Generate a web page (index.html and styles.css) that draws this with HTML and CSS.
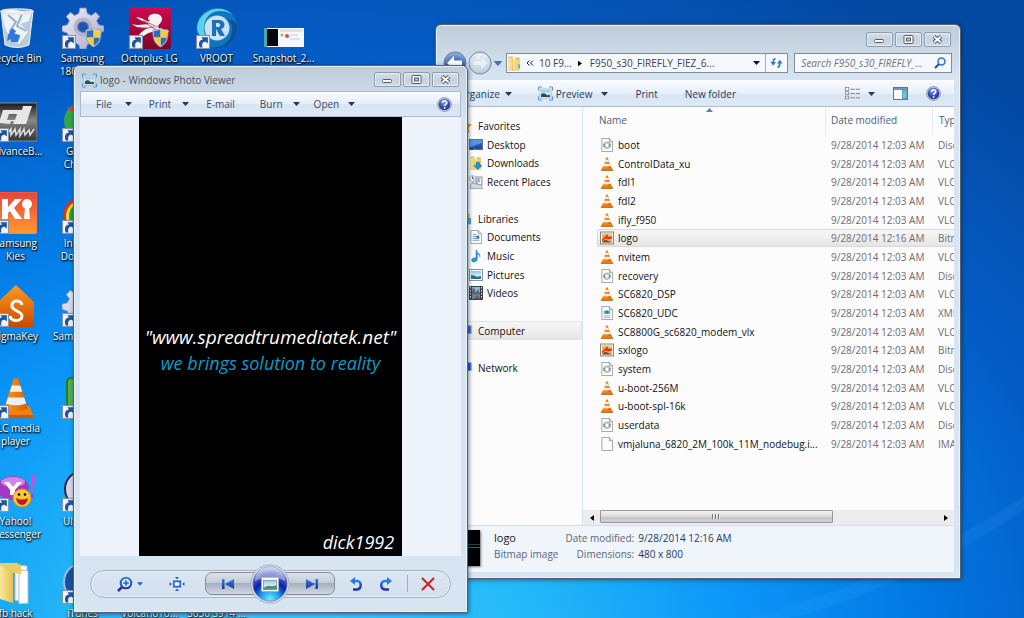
FILE: index.html
```html
<!DOCTYPE html>
<html lang="en">
<head>
<meta charset="utf-8">
<title>Desktop</title>
<link rel="stylesheet" href="styles.css">
</head>
<body>
<svg class="defs" aria-hidden="true">
  <defs>
    <linearGradient id="g-orange" x1="0" y1="0" x2="0" y2="1"><stop offset="0" stop-color="#ff9a1f"/><stop offset="1" stop-color="#c84a00"/></linearGradient>
    <linearGradient id="g-cone" x1="0" y1="0" x2="1" y2="0"><stop offset="0" stop-color="#ff9a20"/><stop offset=".5" stop-color="#f47a08"/><stop offset="1" stop-color="#d25c00"/></linearGradient>
    <linearGradient id="g-kies" x1="0" y1="0" x2="0" y2="1"><stop offset="0" stop-color="#e5443a"/><stop offset="1" stop-color="#ff9c2c"/></linearGradient>
    <linearGradient id="g-oct" x1="0" y1="0" x2="0" y2="1"><stop offset="0" stop-color="#d10a50"/><stop offset="1" stop-color="#7c0728"/></linearGradient>
    <linearGradient id="g-gear" x1="0" y1="0" x2="1" y2="1"><stop offset="0" stop-color="#f1f1fb"/><stop offset="1" stop-color="#a7a7cb"/></linearGradient>
    <linearGradient id="g-folder" x1="0" y1="0" x2="1" y2="0"><stop offset="0" stop-color="#fff0a8"/><stop offset="1" stop-color="#e3c155"/></linearGradient>
    <linearGradient id="g-blue" x1="0" y1="0" x2="0" y2="1"><stop offset="0" stop-color="#2a80e8"/><stop offset="1" stop-color="#23329c"/></linearGradient>
    <linearGradient id="g-sky" x1="0" y1="0" x2="0" y2="1"><stop offset="0" stop-color="#8bc4ec"/><stop offset=".55" stop-color="#d7ecf3"/><stop offset="1" stop-color="#3c9a74"/></linearGradient>
    <linearGradient id="g-adv" x1="0" y1="0" x2="0" y2="1"><stop offset="0" stop-color="#181818"/><stop offset=".45" stop-color="#888"/><stop offset="1" stop-color="#333"/></linearGradient>
    <radialGradient id="g-orb" cx=".5" cy=".95" r=".95"><stop offset="0" stop-color="#6ff0ff"/><stop offset=".3" stop-color="#1a9aee"/><stop offset=".55" stop-color="#0a20a8"/><stop offset=".8" stop-color="#5560c8"/><stop offset="1" stop-color="#c8cdf0"/></radialGradient>
    <radialGradient id="g-back" cx=".5" cy=".9" r=".9"><stop offset="0" stop-color="#4aa4ec"/><stop offset=".5" stop-color="#2758ac"/><stop offset="1" stop-color="#9dbce4"/></radialGradient>
    <radialGradient id="g-fwd" cx=".5" cy=".2" r=".9"><stop offset="0" stop-color="#eef4fa"/><stop offset="1" stop-color="#b5c6d8"/></radialGradient>
    <radialGradient id="g-help" cx=".45" cy=".3" r=".8"><stop offset="0" stop-color="#7a97ec"/><stop offset=".6" stop-color="#2d49b8"/><stop offset="1" stop-color="#16267c"/></radialGradient>

    <symbol id="cut" viewBox="0 0 13 13"><rect x=".5" y=".5" width="12" height="12" fill="#f2f4f8" stroke="#8a94a2"/><path d="M3.500 11.500C1.500 7 4 4.200 6.500 4.200L5 2h6v6L9 6.300C6.500 6.300 5 8 6 11.500z" fill="#1f559f"/></symbol>
    <symbol id="shield" viewBox="0 0 18 22"><path d="M9 1c3 2 5 2 8 2 0 9-1 14-8 18C2 17 1 12 1 3c3 0 5 0 8-2z" fill="#e6e9ee" stroke="#8d96a4"/><path d="M9 2.500V11H2.300C2 9 2 7 2 4c3 0 5-.5 7-1.500zM9 11h6.700c-.6 4-2.500 6.500-6.700 9z" fill="#2c6cc4"/><path d="M9 2.500C11 3.500 13 4 16 4c0 3 0 5-.3 7H9zM9 11v9c-4.200-2.500-6.100-5-6.700-9z" fill="#f6ca3a"/></symbol>
    <symbol id="gear" viewBox="0 0 40 40"><path d="M17 1h6l1 5 4 2 4-3 4 4-3 4 2 4 5 1v5l-5 2-2 4 3 4-4 4-4-3-4 2-1 4h-6l-1-4-4-2-4 3-4-4 3-4-2-4-5-2v-5l5-1 2-4-3-4 4-4 4 3 4-2z" fill="url(#g-gear)" stroke="#8585b4" stroke-width=".8"/><circle cx="20" cy="19" r="9" fill="#b3b3d2"/><circle cx="20" cy="19" r="5" fill="#1558b8" stroke="#707098"/></symbol>
    <symbol id="cone" viewBox="0 0 14 16"><path d="M2 11h10l2 4.500H0z" fill="#f08010"/><path d="M0 14.500h14v1.200H0z" fill="#c85c00"/><path d="M6.200.5h1.600L11.500 12c-1.500 1.300-7.500 1.300-9 0z" fill="url(#g-cone)"/><path d="M5.400 3.200h3.200l.8 2.400H4.600zM3.900 7.800h6.200l.8 2.300c-2 .9-5.800.9-7.700 0z" fill="#eceef0"/></symbol>
    <symbol id="doc" viewBox="0 0 13 15"><path d="M1 .5h8l3.500 3.500v10.500H1z" fill="#fbfcfc" stroke="#9aa0a6"/><path d="M9 .5V4h3.500" fill="#dfe4e8" stroke="#9aa0a6"/></symbol>
    <symbol id="disc" viewBox="0 0 13 15"><use href="#doc"/><circle cx="6.500" cy="7.700" r="3.500" fill="#cdd2cf" stroke="#989ea2" stroke-width=".8"/><circle cx="6.500" cy="7.700" r="1.300" fill="#fff"/><path d="M3.500 6v3.500M9.500 6v3.500" stroke="#5c7c68"/></symbol>
    <symbol id="xml" viewBox="0 0 13 15"><use href="#doc"/><rect x="3" y="5" width="7" height="3.500" fill="#5ab8c8"/><rect x="5" y="5" width="3" height="3" fill="#288c74"/><path d="M3 10.500h7M3 12.300h7" stroke="#9bb0cc"/></symbol>
    <symbol id="bmp" viewBox="0 0 14 13"><rect x=".5" y=".5" width="13" height="12" fill="#f1f1ee" stroke="#858585"/><rect x="2" y="2" width="10" height="9" fill="#f4b568"/><path d="M2 8l5-5 5 2v2l-4 1-3-1-3 3z" fill="#d8351c"/><path d="M7 5l3-3 2 3z" fill="#f6d850"/><path d="M2 11l3-3 7 3z" fill="#7c4c20"/><path d="M8 9l4-2v3z" fill="#c8b088"/></symbol>
    <symbol id="photo" viewBox="0 0 15 14"><path d="M.5 4V.5H4M11 .5h3.500V4M14.500 10v3.500H11M4 13.500H.5V10" fill="none" stroke="#4b9bdc"/><rect x="2" y="2.500" width="11" height="9" fill="#fff" stroke="#90a4b8" stroke-width=".7"/><rect x="3" y="3.500" width="9" height="7" fill="url(#g-sky)"/><path d="M3 10.500V8c2-2 4-1 5 0s2 1 4 .5v2z" fill="#1b5265"/></symbol>
    <symbol id="help" viewBox="0 0 15 15"><circle cx="7.500" cy="7.500" r="7" fill="#c3c9d4" stroke="#858c98" stroke-width=".7"/><circle cx="7.500" cy="7.500" r="5.800" fill="url(#g-help)"/><path d="M5.300 6c0-3 4.700-2.800 4.500-.1-.1 1.500-2.200 1.500-2.200 3" fill="none" stroke="#fff" stroke-width="1.500"/><circle cx="7.600" cy="11" r=".9" fill="#fff"/></symbol>
    <symbol id="down" viewBox="0 0 7 4"><path d="M0 0h7L3.500 4z" fill="currentColor"/></symbol>
    <symbol id="w-min" viewBox="0 0 11 9"><rect x=".5" y="4.500" width="9" height="3" rx="1" fill="#fff" stroke="#535a68"/></symbol>
    <symbol id="w-max" viewBox="0 0 11 9"><rect x="1" y=".5" width="9" height="8" rx="1" fill="#fff" stroke="#535a68"/><rect x="3.500" y="3" width="4" height="3" fill="#b7c4d5" stroke="#535a68"/></symbol>
    <symbol id="w-close" viewBox="0 0 11 9"><path d="M2 1.500l7 6M9 1.500l-7 6" stroke="#535a68" stroke-width="3.800"/><path d="M2.300 1.800l6.400 5.400M8.700 1.800L2.300 7.200" stroke="#fff" stroke-width="1.800"/></symbol>
    <symbol id="folder" viewBox="0 0 14 16"><path d="M1 1h5l1 1h5v13H1z" fill="#e2bc56" stroke="#c09a3a" stroke-width=".5"/><path d="M4 1.500h4v13H4z" fill="#fffbe4"/><path d="M1 1.500l5 1.500v13l-5-1.500z" fill="url(#g-folder)"/><path d="M7 3h5v12H7z" fill="#efd374"/><path d="M11 9h2v4h-2z" fill="#67a6c4"/></symbol>
  </defs>
</svg>
<main class="desktop">
  <svg class="streak" viewBox="0 0 300 140" preserveAspectRatio="none" aria-hidden="true"><path d="M30 140C120 115 220 70 300 15v14C220 84 130 126 70 140z" fill="#38aaff" opacity=".14"/></svg>

  <ul class="icons">
    <li class="shortcut"><span class="art"><svg viewBox="0 0 42 42"><path d="M6 4h32l-4 34q-12 5-24 0z" fill="#bccbdc" stroke="#edf4fa"/><path d="M7 5q8-5 15-2t15 1l-3 10-9 3 8 8-9 12-8-5-5-9-3-10z" fill="#eef3f8"/><path d="M13 8l8 7-6 9 10 6M27 7l-5 12 9 5" fill="none" stroke="#9bb0c6" stroke-width="2"/><path d="M13 28l4-7 4 3-2 3 6 1-2 7h-7v-3l-4 2z" fill="#2c78dc"/><ellipse cx="22" cy="4.500" rx="16" ry="2.500" fill="none" stroke="#dbe4ec" stroke-width="1.500"/></svg></span><span class="label">Recycle Bin</span></li>
    <li class="shortcut"><span class="art"><svg viewBox="0 0 42 42"><rect x="0" y="3" width="42" height="38" fill="url(#g-adv)" stroke="#8c8c8c"/><path d="M4 23l4-13h19l1-4h9l-6 18H18l1-3h-3l-1 3zM14 14l-2 6h8l2-6z" fill="#e7e7e7" fill-rule="evenodd"/><path d="M12 34l4-5v6l4-6 1 6 4-6v7l4-7 1 6 4-5 1 5 4-6" fill="none" stroke="#ddd" stroke-width="1.500"/></svg><svg class="cut"><use href="#cut"/></svg></span><span class="label">AdvanceB...</span></li>
    <li class="shortcut"><span class="art"><svg viewBox="0 0 42 42"><rect x="0" y="0" width="42" height="42" rx="2" fill="url(#g-kies)" stroke="#ff6a50"/><path d="M7 7h6v8l7-8h7l-8 9 8 11h-7l-5-8-2 2v6H7z" fill="#fff"/><circle cx="32" cy="12" r="5" fill="#fff"/><path d="M30 15h4l1 12h-6z" fill="#fff"/></svg><svg class="cut"><use href="#cut"/></svg></span><span class="label">Samsung<br>Kies</span></li>
    <li class="shortcut"><span class="art"><svg viewBox="0 0 42 42"><path d="M21 0l18 17v25H3V17z" fill="url(#g-orange)"/><path d="M27 20c-1-6-11-5-10 1 0 5 10 5 10 10 0 6-11 6-12 0" fill="none" stroke="#fff" stroke-width="3"/></svg><svg class="cut"><use href="#cut"/></svg></span><span class="label">SigmaKey</span></li>
    <li class="shortcut"><span class="art"><svg viewBox="0 0 14 16"><use href="#cone"/></svg><svg class="cut"><use href="#cut"/></svg></span><span class="label">VLC media<br>player</span></li>
    <li class="shortcut"><span class="art"><svg viewBox="0 0 42 42"><ellipse cx="18" cy="18" rx="16" ry="12" fill="#a536c4"/><ellipse cx="18" cy="12" rx="12" ry="5" fill="#d99bec" opacity=".8"/><path d="M9 12h5l4 5 4-5h5l-7 8v5h-5v-5z" fill="#fff"/><path d="M36 6l5-1-3 17h-2z" fill="#c650d8"/><circle cx="37" cy="26" r="1.800" fill="#9c38b8"/><circle cx="27" cy="28" r="9" fill="#ffc832" stroke="#e08c10"/><path d="M21 28q6 3 12 0-1 7-6 7t-6-7z" fill="#b82020"/><circle cx="24" cy="24.500" r="1.300"/><circle cx="30" cy="24.500" r="1.300"/></svg><svg class="cut"><use href="#cut"/></svg></span><span class="label">Yahoo!<br>Messenger</span></li>
    <li class="shortcut"><span class="art"><svg viewBox="0 0 42 42"><path d="M20 3l12 1v38l-12-4z" fill="#f4f6f8" stroke="#b8bcc4"/><path d="M24 8l9 1v32l-9 1z" fill="#fff" stroke="#b8bcc4"/><path d="M0 1h22l4 2v9L0 8z" fill="#e9cc68"/><path d="M2 2l16 8v31L2 36z" fill="url(#g-folder)"/></svg></span><span class="label">fb hack</span></li>

    <li class="shortcut"><span class="art"><svg viewBox="0 0 40 40"><use href="#gear"/></svg><svg class="shield"><use href="#shield"/></svg><svg class="cut"><use href="#cut"/></svg></span><span class="label">Samsung<br>1800 Tool</span></li>
    <li class="shortcut"><span class="art"><svg viewBox="0 0 42 42"><circle cx="21" cy="21" r="19" fill="#34a64a"/><path d="M6 10Q18-4 33 7l5 7H21z" fill="#e33b2e"/><circle cx="21" cy="21" r="9" fill="#3d7be8" stroke="#fff" stroke-width="2"/></svg><svg class="cut"><use href="#cut"/></svg></span><span class="label">Google<br>Chrome</span></li>
    <li class="shortcut"><span class="art"><svg viewBox="0 0 42 42"><circle cx="20" cy="24" r="15" fill="none" stroke="#db3320" stroke-width="8"/><circle cx="20" cy="24" r="14" fill="none" stroke="#f1dc26" stroke-width="4"/><circle cx="20" cy="24" r="11" fill="none" stroke="#2a9a3a" stroke-width="4"/></svg><svg class="cut"><use href="#cut"/></svg></span><span class="label">Internet<br>Downlo...</span></li>
    <li class="shortcut"><span class="art"><svg viewBox="0 0 40 40"><use href="#gear"/></svg><svg class="cut"><use href="#cut"/></svg></span><span class="label">Samsung 2...</span></li>
    <li class="shortcut"><span class="art"><svg viewBox="0 0 42 42"><rect x="5" y="1" width="32" height="38" rx="4" fill="#55ad4c" stroke="#217c2c" stroke-width="2"/></svg><svg class="cut"><use href="#cut"/></svg></span><span class="label">Go</span></li>
    <li class="shortcut"><span class="art"><svg viewBox="0 0 42 42"><circle cx="21" cy="19" r="18" fill="#d7d5ee" stroke="#282838" stroke-width="2"/><circle cx="21" cy="19" r="10" fill="#a2784c"/></svg><svg class="cut"><use href="#cut"/></svg></span><span class="label">UltraISO</span></li>
    <li class="shortcut"><span class="art"><svg viewBox="0 0 42 42"><circle cx="21" cy="20" r="19" fill="#1c4f9c" stroke="#9dbbe0" stroke-width="2"/></svg><svg class="cut"><use href="#cut"/></svg></span><span class="label">iTunes</span></li>

    <li class="shortcut at-3"><span class="art"><svg viewBox="0 0 42 42"><rect width="42" height="42" rx="3" fill="url(#g-oct)"/><path d="M19 12c0-7 14-7 14 0 0 4-4 5-4 8 3 3 7 5 12 4-4 3-9 2-13-1 1 6 4 10 5 15-4-4-7-8-9-13-6 0-11 6-21 11 5-6 9-12 16-15-5-1-11 1-16-4 6 2 11 0 17 0-4-3-9-3-13-7 6 0 10 5 14 4 0-1-2-1-2-2z" fill="#f7f1f3"/><path d="M14 13l14 7M16 16l12 7M12 22l13-2" stroke="#a73958" stroke-width=".8"/></svg><svg class="shield"><use href="#shield"/></svg><svg class="cut"><use href="#cut"/></svg></span><span class="label">Octoplus LG</span></li>
    <li class="shortcut at-4"><span class="art"><svg viewBox="0 0 42 42"><circle cx="21" cy="21" r="20.500" fill="#0d76bc"/><path d="M1 20C3 4 24-5 37 8 25 0 9 4 8 20c-1 6 2 9 4 12C4 30 1 26 1 20z" fill="#5ed0ec"/><path d="M41 18c2 17-14 28-29 21 12 4 23-3 24-15 1-6-2-9-4-12 5 1 8 3 9 6z" fill="#0f4f98"/><circle cx="21" cy="21" r="12.500" fill="#c8e1f6"/><path d="M16 13h7c7 0 7 8 2 9l4 7h-5l-4-7v7h-4zm4 3v4h2c3 0 3-4 0-4z" fill="#1f6fb8"/></svg><svg class="cut"><use href="#cut"/></svg></span><span class="label">VROOT</span></li>
    <li class="shortcut at-5"><span class="art"><svg viewBox="0 0 42 42"><rect x="1" y="21" width="40" height="19" fill="#f5f7f8"/><rect x="4" y="22" width="11" height="17" fill="#080808"/><path d="M1 21h3v19H1z" fill="#4aa8ac"/><path d="M17 22h23v3H17z" fill="#dde4ec"/><circle cx="19" cy="28" r="1.500" fill="#8cc444"/><circle cx="24" cy="29" r="2" fill="#e04860"/><path d="M27 28h8M27 32h10" stroke="#ccc"/></svg></span><span class="label">Snapshot_2...</span></li>
    <li class="shortcut bottom at-3"><span class="art"></span><span class="label">VolcanoTo...</span></li>
    <li class="shortcut bottom at-4"><span class="art"></span><span class="label">S650 S914 ...</span></li>
  </ul>

  <section class="window explorer" aria-label="Windows Explorer">
    <header class="caption">
      <div class="controls">
        <button aria-label="Minimize"><svg><use href="#w-min"/></svg></button>
        <button aria-label="Maximize"><svg><use href="#w-max"/></svg></button>
        <button aria-label="Close"><svg><use href="#w-close"/></svg></button>
      </div>
    </header>
    <div class="nav-row">
      <button class="round" aria-label="Back"><svg viewBox="0 0 24 24"><circle cx="12" cy="12" r="11" fill="url(#g-back)" stroke="#67788e"/><path d="M11 5l-7 7 7 7v-4.500h8v-5h-8z" fill="#fff"/></svg></button>
      <button class="round" aria-label="Forward"><svg viewBox="0 0 24 24"><circle cx="12" cy="12" r="11" fill="url(#g-fwd)" stroke="#77879a"/><path d="M13 5l7 7-7 7v-4.500H5v-5h8z" fill="#e9f0f6" stroke="#d0dae4"/></svg></button>
      <button class="recent" aria-label="Recent pages"><svg viewBox="0 0 8 5"><path d="M.5.500h7L4 4.500z" fill="#3c78b4" stroke="#26486c" stroke-width=".6"/></svg></button>
      <div class="address">
        <svg class="i16"><use href="#folder"/></svg>
        <button class="crumb chevrons" aria-label="More locations"><svg viewBox="0 0 8 6"><path d="M3.500.5L1 3l2.500 2.500M7 .5L4.500 3 7 5.500" fill="none" stroke="#222"/></svg></button>
        <button class="crumb">10 F9...</button>
        <svg class="sep" viewBox="0 0 5 7"><path d="M0 0v7l5-3.500z"/></svg>
        <button class="crumb grow">F950_s30_FIREFLY_FIEZ_6...</button>
        <button class="drop" aria-label="Address history"><svg class="down"><use href="#down"/></svg></button>
        <button class="refresh" aria-label="Refresh"><svg viewBox="0 0 14 12"><path d="M6 1.500C3.500 1.500 3.500 3 3.500 6M8 10.500c2.500 0 2.500-2 2.500-5" fill="none" stroke="#2a7cc8" stroke-width="1.800"/><path d="M.5 5h6l-3 4zM7.500 6.500h6l-3-4z" fill="#2a7cc8"/></svg></button>
      </div>
      <label class="search"><input type="text" aria-label="Search" placeholder="Search F950_s30_FIREFLY_..."><svg viewBox="0 0 12 12"><circle cx="7.500" cy="4.500" r="3.500" fill="#eaf5fd" stroke="#2d75be" stroke-width="1.500"/><path d="M5 7l-4 4" stroke="#24509a" stroke-width="2"/></svg></label>
    </div>
    <div class="client">
      <div class="toolbar">
        <button class="organize">Organize<svg class="down"><use href="#down"/></svg></button>
        <button class="preview"><svg class="i16"><use href="#photo"/></svg>Preview<svg class="down"><use href="#down"/></svg></button>
        <button>Print</button>
        <button>New folder</button>
        <div class="tools">
          <button aria-label="Change view"><svg class="i16" viewBox="0 0 14 12"><g fill="#fff" stroke="#8a7070" stroke-width=".7"><rect x=".5" y=".5" width="3" height="2.500"/><rect x=".5" y="4.500" width="3" height="2.500"/><rect x=".5" y="8.500" width="3" height="2.500"/></g><path d="M5 2h4M10 2h4M5 6h4M10 6h4M5 10h4M10 10h4" stroke="#647890" stroke-width=".8"/></svg><svg class="down"><use href="#down"/></svg></button>
          <button aria-label="Show the preview pane"><svg class="i16" viewBox="0 0 15 13"><rect x=".5" y=".5" width="14" height="12" fill="#fff" stroke="#5b7895"/><path d="M1 2h13" stroke="#7497b5" stroke-width="2"/><rect x="9.500" y="3" width="4.500" height="9" fill="#6ec0d8" stroke="#4a8aa8" stroke-width=".7"/></svg></button>
          <button aria-label="Help"><svg class="i16"><use href="#help"/></svg></button>
        </div>
      </div>
      <div class="panes">
        <nav class="tree">
          <ul>
            <li><a href="#"><svg viewBox="0 0 16 16"><path d="M8 0l2.500 5.500L16 6l-4 4 1 6-5-3-5 3 1-6-4-4 5.500-.5z" fill="#f08a24"/></svg>Favorites</a></li>
            <li class="sub"><a href="#"><svg viewBox="0 0 14 14"><rect x=".5" y="1.500" width="13" height="10" fill="#2456b8" stroke="#627084"/><path d="M1 2h12v3L1 9z" fill="#5793e4"/><path d="M1 10h3v1.500H1zM6 9h6v1H6z" fill="#173b7c"/></svg>Desktop</a></li>
            <li class="sub"><a href="#"><svg viewBox="0 0 14 16"><use href="#folder"/><path d="M7 7h4v4h2.500L9 15.500 4.500 11H7z" fill="#2290e0" stroke="#156cb0" stroke-width=".6"/></svg>Downloads</a></li>
            <li class="sub"><a href="#"><svg viewBox="0 0 14 14"><rect x="4" y="2" width="9" height="8" fill="#e6edf2" stroke="#8694a4"/><path d="M6 4h5M6 6h5M6 8h3" stroke="#5f83a4"/><circle cx="3.500" cy="3.500" r="3" fill="#f3f5f7" stroke="#98a2ac" stroke-width=".7"/><path d="M3.500 1.500v2H5" fill="none" stroke="#556"/><path d="M2 8l10 2 1.500 3.500H1z" fill="#d5dade" stroke="#8a929a" stroke-width=".7"/></svg>Recent Places</a></li>
            <li class="start"><a href="#"><svg viewBox="0 0 14 16"><path d="M1 2h12v12H1z" fill="#ecc862"/><path d="M7 7h7v7H7z" fill="#4fa8d8"/></svg>Libraries</a></li>
            <li class="sub"><a href="#"><svg viewBox="0 0 13 15"><use href="#doc"/><path d="M3 5h4M3 7h4M3 9h7M3 11h7" stroke="#6d97c4"/><path d="M7 6h3v3H7z" fill="#2e72b8"/></svg>Documents</a></li>
            <li class="sub"><a href="#"><svg viewBox="0 0 14 16"><path d="M7.500 1c0 4 5 3.500 4 8-.5-3-3-3-3-3v6c0 3-6 4-6.500 1 0-2.500 3-3.500 5-2.500V1z" fill="#2c98dc" stroke="#176ca8" stroke-width=".5"/></svg>Music</a></li>
            <li class="sub"><a href="#"><svg viewBox="0 0 14 12"><rect x=".5" y=".5" width="13" height="11" fill="#fff" stroke="#8394a4"/><rect x="2" y="2" width="10" height="8" fill="url(#g-sky)"/><path d="M2 10V6q4 0 6 2l4-1v3z" fill="#29748c"/></svg>Pictures</a></li>
            <li class="sub"><a href="#"><svg viewBox="0 0 14 14"><rect width="14" height="14" rx="1" fill="#383c44"/><rect x="3" y="1" width="8" height="5.500" fill="#6cc4ee"/><rect x="3" y="7.500" width="8" height="5.500" fill="#4a8ebc"/><path d="M4 1l3 5 3-3v3.500H3M5 13l3-4 3 4" fill="#a24438"/><path d="M1.500 1v12M12.500 1v12" stroke="#dfe2e5" stroke-dasharray="1.500 1.500"/></svg>Videos</a></li>
            <li class="start current"><a href="#"><svg viewBox="0 0 16 16"><rect x="1" y="2" width="14" height="9" fill="#405ed0" stroke="#98a2b4"/><path d="M6 12h4v2H5z" fill="#8b95a8"/></svg>Computer</a></li>
            <li class="start"><a href="#"><svg viewBox="0 0 16 16"><rect x="3" y="2" width="12" height="9" fill="#2550dc" stroke="#8aa0c4"/><path d="M7 12h4v2H6z" fill="#71809c"/></svg>Network</a></li>
          </ul>
        </nav>
        <div class="files">
          <div class="scroller">
          <table>
            <colgroup><col><col class="c-date"><col class="c-type"></colgroup>
            <thead><tr><th>Name<svg class="sort" viewBox="0 0 7 4"><path d="M3.500 0L7 4H0z" fill="#4a88aa"/></svg></th><th>Date modified</th><th>Type</th></tr></thead>
            <tbody>
              <tr><td><svg><use href="#disc"/></svg>boot</td><td>9/28/2014 12:03 AM</td><td>Disc Image File</td></tr>
              <tr><td><svg><use href="#cone"/></svg>ControlData_xu</td><td>9/28/2014 12:03 AM</td><td>VLC media file</td></tr>
              <tr><td><svg><use href="#cone"/></svg>fdl1</td><td>9/28/2014 12:03 AM</td><td>VLC media file</td></tr>
              <tr><td><svg><use href="#cone"/></svg>fdl2</td><td>9/28/2014 12:03 AM</td><td>VLC media file</td></tr>
              <tr><td><svg><use href="#cone"/></svg>ifly_f950</td><td>9/28/2014 12:03 AM</td><td>VLC media file</td></tr>
              <tr class="selected"><td><svg><use href="#bmp"/></svg>logo</td><td>9/28/2014 12:16 AM</td><td>Bitmap image</td></tr>
              <tr><td><svg><use href="#cone"/></svg>nvitem</td><td>9/28/2014 12:03 AM</td><td>VLC media file</td></tr>
              <tr><td><svg><use href="#disc"/></svg>recovery</td><td>9/28/2014 12:03 AM</td><td>Disc Image File</td></tr>
              <tr><td><svg><use href="#cone"/></svg>SC6820_DSP</td><td>9/28/2014 12:03 AM</td><td>VLC media file</td></tr>
              <tr><td><svg><use href="#xml"/></svg>SC6820_UDC</td><td>9/28/2014 12:03 AM</td><td>XML Document</td></tr>
              <tr><td><svg><use href="#cone"/></svg>SC8800G_sc6820_modem_vlx</td><td>9/28/2014 12:03 AM</td><td>VLC media file</td></tr>
              <tr><td><svg><use href="#bmp"/></svg>sxlogo</td><td>9/28/2014 12:03 AM</td><td>Bitmap image</td></tr>
              <tr><td><svg><use href="#disc"/></svg>system</td><td>9/28/2014 12:03 AM</td><td>Disc Image File</td></tr>
              <tr><td><svg><use href="#cone"/></svg>u-boot-256M</td><td>9/28/2014 12:03 AM</td><td>VLC media file</td></tr>
              <tr><td><svg><use href="#cone"/></svg>u-boot-spl-16k</td><td>9/28/2014 12:03 AM</td><td>VLC media file</td></tr>
              <tr><td><svg><use href="#disc"/></svg>userdata</td><td>9/28/2014 12:03 AM</td><td>Disc Image File</td></tr>
              <tr><td><svg><use href="#doc"/></svg>vmjaluna_6820_2M_100k_11M_nodebug.i...</td><td>9/28/2014 12:03 AM</td><td>IMAGE File</td></tr>
            </tbody>
          </table>
          </div>
          <div class="scrollbar">
            <button aria-label="Scroll left"><svg viewBox="0 0 4 6"><path d="M4 0v6L0 3z"/></svg></button>
            <div class="track"><div class="thumb"><i></i><i></i><i></i></div></div>
            <button aria-label="Scroll right"><svg viewBox="0 0 4 6"><path d="M0 0v6l4-3z"/></svg></button>
          </div>
        </div>
      </div>
      <footer class="details">
        <div class="thumbnail"></div>
        <div class="fact"><span class="name">logo</span><span class="key">Bitmap image</span></div>
        <dl><dt>Date modified:</dt><dd>9/28/2014 12:16 AM</dd><dt>Dimensions:</dt><dd>480 x 800</dd></dl>
      </footer>
    </div>
  </section>

  <section class="window viewer" aria-label="Windows Photo Viewer">
    <header class="caption">
      <svg class="i16"><use href="#photo"/></svg>
      <h1>logo - Windows Photo Viewer</h1>
      <div class="controls">
        <button aria-label="Minimize"><svg><use href="#w-min"/></svg></button>
        <button aria-label="Maximize"><svg><use href="#w-max"/></svg></button>
        <button aria-label="Close"><svg><use href="#w-close"/></svg></button>
      </div>
    </header>
    <div class="menubar">
      <button>File<svg class="down"><use href="#down"/></svg></button>
      <button class="print">Print<svg class="down"><use href="#down"/></svg></button>
      <button class="email">E-mail</button>
      <button class="burn">Burn<svg class="down"><use href="#down"/></svg></button>
      <button class="open">Open<svg class="down"><use href="#down"/></svg></button>
      <button class="help" aria-label="Help"><svg class="i16"><use href="#help"/></svg></button>
    </div>
    <div class="stage">
      <figure class="picture">
        <p class="site">"www.spreadtrumediatek.net"</p>
        <p class="slogan">we brings solution to reality</p>
        <p class="author">dick1992</p>
      </figure>
    </div>
    <footer class="player">
      <div class="pill">
        <button class="zoom" aria-label="Change the display size"><svg class="t16" viewBox="0 0 16 16"><path d="M6 10l-5 5" stroke="#26329c" stroke-width="2.500"/><circle cx="9" cy="7" r="5.300" fill="#dcebfa" stroke="url(#g-blue)" stroke-width="2"/><path d="M9 4.200v5.600M6.200 7h5.600" stroke="#1f62c8" stroke-width="1.600"/></svg><svg class="down"><use href="#down"/></svg></button>
        <button class="fit" aria-label="Fit to window"><svg class="t16" viewBox="0 0 16 16"><rect x="4.800" y="5.300" width="6.400" height="5.400" fill="#e6f0fa" stroke="#2563c4" stroke-width="1.700"/><path d="M6 1h4L8 3.500zM6 15h4l-2-2.500zM.5 6v4L3 8zM15.500 6v4L13 8z" fill="#2860c4"/></svg></button>
        <div class="transport">
          <button aria-label="Previous"><svg viewBox="0 0 14 10"><path d="M1 0h2.500v10H1zM13 0v10L4 5z" fill="url(#g-blue)"/></svg></button>
          <button class="orb" aria-label="Play slide show"><svg viewBox="0 0 42 42"><circle cx="21" cy="21" r="20" fill="#dfe5ee" stroke="#a2a9b8"/><circle cx="21" cy="21" r="18" fill="url(#g-orb)" stroke="#6873a8" stroke-width=".7"/><path d="M5 18a16 15 0 0 1 32 0Q21 10 5 18z" fill="#fff" opacity=".4"/><rect x="12" y="14" width="18" height="15" rx="1" fill="#fff" stroke="#a6acb6"/><rect x="14" y="17" width="14" height="10" fill="url(#g-sky)" stroke="#68788a" stroke-width=".6"/><path d="M14 26q4-4 7-3t7-1v4z" fill="#4c8c70"/></svg></button>
          <button aria-label="Next"><svg viewBox="0 0 14 10"><path d="M1 0v10l9-5zM10.500 0H13v10h-2.500z" fill="url(#g-blue)"/></svg></button>
        </div>
        <button class="ccw" aria-label="Rotate counterclockwise"><svg class="t14" viewBox="0 0 14 14"><path d="M5 4h3c5 0 5 8 0 8.500H4" fill="none" stroke="url(#g-blue)" stroke-width="2.600"/><path d="M6 0v8L1 4z" fill="#287cdc"/></svg></button>
        <button class="cw" aria-label="Rotate clockwise"><svg class="t14" viewBox="0 0 14 14"><path d="M9 4H6c-5 0-5 8 0 8.500h4" fill="none" stroke="url(#g-blue)" stroke-width="2.600"/><path d="M8 0v8l5-4z" fill="#287cdc"/></svg></button>
        <span class="rule"></span>
        <button aria-label="Delete"><svg class="t14" viewBox="0 0 14 14"><path d="M1.500 1.500l11 11M12.500 1.500l-11 11" stroke="#cc2222" stroke-width="2" stroke-linecap="round"/></svg></button>
      </div>
    </footer>
  </section>
</main>
</body>
</html>
```
FILE: styles.css
```css
* { box-sizing: border-box; }
body { margin: 0; font: 10px/14px "Open Sans", "Noto Sans", sans-serif; color: #1a1a1a; }
button { font: inherit; color: inherit; border: 0; padding: 0; background: none; display: flex; align-items: center; white-space: nowrap; }
svg { display: block; flex: none; }
ul, h1, p, figure, dl, dd { margin: 0; padding: 0; list-style: none; }
.defs { position: absolute; width: 0; height: 0; }
.i16 { width: 15px; height: 15px; }
.t16 { width: 16px; height: 16px; }
.t14 { width: 14px; height: 14px; }
.down { width: 7px; height: 4px; color: #1e395b; }

.desktop {
  position: relative;
  height: 100vh;
  overflow: hidden;
  background: radial-gradient(ellipse 100% 125% at 30% 105%, #3ccaff 0, #25b8f8 22%, #0c96f8 42%, #027ae4 59%, #045cc6 77%, #0449a2 100%);
}
.streak { position: absolute; right: 0; bottom: 0; width: 30%; height: 22%; }

/* Desktop shortcuts */
.icons {
  display: grid;
  grid-template-columns: repeat(5, 67px);
  grid-template-rows: repeat(3, 93px 92px) 93px;
  grid-auto-flow: column;
  margin-left: -18px;
  padding-top: 7px;
}
.shortcut { display: flex; flex-direction: column; align-items: center; gap: 3px; color: #fff; line-height: 13px; text-align: center; white-space: nowrap; text-shadow: 0 1px 2px #000, 1px 1px 2px #000; }
.at-3 { grid-column: 3; grid-row: 1; }
.at-4 { grid-column: 4; grid-row: 1; }
.at-5 { grid-column: 5; grid-row: 1; }
.bottom { grid-row: 7; }
.art { position: relative; width: 42px; height: 42px; }
.art > svg { width: 42px; height: 42px; }
.art > .cut { position: absolute; left: 0; bottom: 0; width: 14px; height: 14px; }
.art > .shield { position: absolute; right: 2px; bottom: 1px; width: 17px; height: 21px; }

/* Window frame */
.window {
  position: absolute;
  display: flex;
  flex-direction: column;
  padding: 0 6px 6px;
  border: 1px solid #56616d;
  border-radius: 6px 6px 1px 1px;
  background: linear-gradient(#bfccd9, #d7e4f1 54px);
  box-shadow: inset 0 0 0 1px #e9f1f9, 1px 1px 4px #00204088;
}
.caption { display: flex; align-items: center; }
.controls { display: flex; gap: 2px; margin-left: auto; }
.controls button { width: 27px; height: 15px; justify-content: center; border: 1px solid #8d9caf; border-radius: 2px; background: linear-gradient(#d5dfea, #c6d2e0 50%, #cddae8); box-shadow: inset 0 0 0 1px #e2eaf3; }
.controls svg { width: 11px; height: 9px; }

/* Explorer */
.explorer { inset: 24px 63px 39px 435px; }
.explorer > .caption { padding: 7px 3px 4px; }
.nav-row { display: flex; align-items: center; height: 24px; padding: 0 2px 0 1px; }
.round, .round svg { width: 24px; height: 24px; }
.round + .round { margin-left: 1px; }
.recent { margin: 0 4px 0 2px; }
.recent svg { width: 8px; height: 5px; }
.address, .search { display: flex; align-items: center; height: 20px; border: 1px solid #7e8c9c; background: #f6f9fc; color: #39424e; }
.address { flex: 1 1 283px; min-width: 0; }
.chevrons { margin: 0 5px 0 4px; }
.chevrons svg { width: 8px; height: 6px; }
.sep { width: 4px; height: 7px; margin: 0 8px 0 6px; }
.grow { flex: 1; min-width: 0; }
.drop { margin-right: 5px; }
.drop .down { color: #101050; }
.refresh { justify-content: center; width: 22px; height: 18px; border-left: 1px solid #a2adba; }
.refresh svg { width: 13px; height: 12px; }
.search { flex: 0 1 158px; margin-left: 6px; padding: 0 5px 0 6px; }
.search input { flex: 1; min-width: 0; padding: 0; border: 0; outline: 0; background: none; font: inherit; }
.search input::placeholder { color: #6c7278; font-style: italic; opacity: 1; }
.search svg { width: 12px; height: 12px; }
.client { flex: 1; display: flex; flex-direction: column; min-height: 0; margin-top: 5px; }
.toolbar { display: flex; align-items: center; height: 27px; padding: 0 13px 0 16px; color: #1e395b; background: linear-gradient(#f8fbff, #e6eff9 50%, #dae6f4 52%, #dde8f6); border-bottom: 1px solid #a9bfd6; border-top: 1px solid #fff; }
.organize { gap: 5px; margin-right: 26px; }
.preview { gap: 3px; margin-right: 27px; }
.preview .down { margin-left: 6px; }
.toolbar > button:nth-child(3) { margin-right: 27px; }
.tools { display: flex; gap: 18px; margin-left: auto; }
.tools button:first-child { gap: 8px; }
.panes { flex: 1; display: flex; min-height: 0; background: #fcfcfc; }
.tree { flex: 0 0 141px; border-right: 1px solid #d6e5f5; padding-top: 9px; }
.tree li { height: 19px; }
.tree li:nth-child(3n) { height: 18px; }
.tree .start { margin-top: 18px; }
.tree .current { margin-top: 19px; }
.tree a { display: flex; align-items: center; height: 100%; gap: 6px; padding-left: 16px; color: #111; text-decoration: none; white-space: nowrap; }
.tree .sub a { gap: 4px; padding-left: 27px; }
.tree svg { width: 14px; height: 14px; }
.current { border: 1px solid #e2e2e2; border-left: 0; border-radius: 2px; background: linear-gradient(#f7f7f7, #e6e6e6); }
.files { flex: 1; display: flex; flex-direction: column; min-width: 0; }
.scroller { flex: 1; overflow: hidden; padding-left: 14px; }
table { width: 100%; table-layout: fixed; border-collapse: separate; border-spacing: 0; }
.c-date { width: 107px; }
.c-type { width: 22px; }
th { position: relative; height: 28px; padding: 0 0 3px 5px; border-left: 1px solid #e3edf7; font-weight: 400; text-align: left; color: #4c607a; white-space: nowrap; overflow: hidden; }
th:first-child { padding-left: 2px; border-left: 0; }
.sort { position: absolute; top: 1px; left: 48%; width: 7px; height: 4px; }
td { height: 19px; padding: 0 0 0 6px; line-height: 14px; white-space: nowrap; overflow: hidden; color: #6d6d6d; }
tr:nth-child(3n) td { height: 18px; line-height: 14px; }
td:nth-child(3), th:nth-child(3) { padding-left: 6px; }
td:first-child { display: flex; align-items: center; gap: 4px; padding-left: 3px; color: #111; }
td svg { width: 14px; height: 14px; }
.selected td { background: linear-gradient(#f8f8f8, #e5e5e5); border: solid #d9d9d9; border-width: 1px 0; }
.selected td:first-child { box-shadow: inset 1px 0 #d9d9d9; border-radius: 2px 0 0 2px; }
.scrollbar { display: flex; height: 15px; background: #ececec; }
.scrollbar button { width: 17px; justify-content: center; }
.scrollbar button svg { width: 4px; height: 6px; }
.track { flex: 1; }
.thumb { display: flex; align-items: center; justify-content: center; gap: 1px; width: 69%; height: 13px; border: 1px solid #989898; border-radius: 1px; background: linear-gradient(#f3f3f3, #dcdcdc 50%, #c5c5c5 55%, #d2d2d2); }
.thumb i { width: 2px; height: 5px; background: #777; border-right: 1px solid #eee; }
.details { display: flex; align-items: flex-start; height: 47px; padding-top: 4px; background: #f0f4fb; border-top: 1px solid #cfdeee; line-height: 16px; }
.thumbnail { width: 22px; height: 36px; margin-left: 16px; background: linear-gradient(#000 14px, #17445a 14px 15px, #000 15px 17px, #555 17px 18px, #000 18px); box-shadow: 1px 1px 2px #777; }
.fact { display: flex; flex-direction: column; margin-left: 14px; }
.name { font-size: 11px; }
.key, dt { color: #5a6779; }
.details dl { display: grid; grid-template-columns: auto auto; column-gap: 4px; margin-left: 7px; }
dt { text-align: right; }
dd { color: #1e395b; }

/* Photo viewer */
.viewer { inset: 65px auto 5px 73px; width: 395px; }
.viewer > .caption { height: 25px; padding: 3px 2px 0 2px; gap: 3px; }
.viewer h1 { font-size: 10px; font-weight: 400; color: #48525e; white-space: nowrap; }
.viewer .controls { margin-top: -1px; }
.menubar { display: flex; align-items: center; height: 26px; padding: 0 8px 0 15px; border: 1px solid #a9bace; background: linear-gradient(#f8fbff, #e4eef9 50%, #d8e4f2 52%, #dde8f6); color: #3b4a68; gap: 17px; }
.menubar button { gap: 13px; }
.menubar .print { gap: 11px; }
.menubar .email { margin-right: 8px; }
.menubar .burn { gap: 10px; }
.menubar .open { margin-left: -3px; gap: 9px; }
.menubar .help { margin-left: auto; }
.stage { flex: 1; min-height: 0; display: flex; justify-content: center; background: #eef3fb; }
.picture { position: relative; height: 100%; aspect-ratio: 3 / 5; background: #000; display: flex; flex-direction: column; align-items: center; padding-top: 207px; font-style: italic; font-size: 18px; line-height: 26px; white-space: nowrap; color: #fff; }
.site { font-size: 19px; }
.slogan { color: #0c9cc4; }
.author { margin: auto 8px 1px auto; }
.player { height: 50px; display: flex; align-items: center; padding: 5px 10px 0; }
.pill { flex: 1; display: flex; align-items: center; height: 28px; padding: 0 15px 0 26px; border: 1px solid #a8b1c0; border-radius: 14px; background: linear-gradient(#dbe6f2, #d3e0ee); box-shadow: inset 0 0 0 1px #e6eef7; }
.zoom { gap: 4px; margin-right: 26px; }
.zoom .down { width: 6px; color: #2860c4; }
.fit { margin-right: 20px; }
.transport { display: flex; align-items: center; width: 130px; height: 23px; border: 1px solid #828c9a; border-radius: 7px; background: linear-gradient(#dde3ea, #c3cdd8 45%, #a5b1be 50%, #cdd8e2); }
.transport button { flex: 1; justify-content: center; }
.transport button svg { width: 14px; height: 10px; }
.transport .orb { flex: 0 0 40px; margin: -10px 0; }
.transport .orb svg { width: 40px; height: 40px; }
.ccw { margin-left: 14px; }
.cw { margin-left: 16px; }
.rule { width: 1px; height: 17px; margin: 0 13px 0 14px; background: #a5aebb; }
```
